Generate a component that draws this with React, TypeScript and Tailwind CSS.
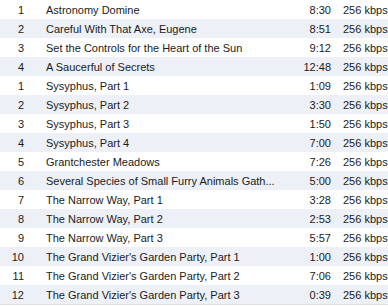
const tracks: [string, string, string][] = [
  ["1", "Astronomy Domine", "8:30"],
  ["2", "Careful With That Axe, Eugene", "8:51"],
  ["3", "Set the Controls for the Heart of the Sun", "9:12"],
  ["4", "A Saucerful of Secrets", "12:48"],
  ["1", "Sysyphus, Part 1", "1:09"],
  ["2", "Sysyphus, Part 2", "3:30"],
  ["3", "Sysyphus, Part 3", "1:50"],
  ["4", "Sysyphus, Part 4", "7:00"],
  ["5", "Grantchester Meadows", "7:26"],
  ["6", "Several Species of Small Furry Animals Gath...", "5:00"],
  ["7", "The Narrow Way, Part 1", "3:28"],
  ["8", "The Narrow Way, Part 2", "2:53"],
  ["9", "The Narrow Way, Part 3", "5:57"],
  ["10", "The Grand Vizier's Garden Party, Part 1", "1:00"],
  ["11", "The Grand Vizier's Garden Party, Part 2", "7:06"],
  ["12", "The Grand Vizier's Garden Party, Part 3", "0:39"],
];

export default function App() {
  return (
    <div
      className="w-[388px] h-[307px] bg-white text-[11px] text-[#1b1b1b] overflow-hidden"
      style={{ fontFamily: '"Liberation Sans", Arial, sans-serif' }}
    >
      {tracks.map(([no, title, len], i) => (
        <div
          key={i}
          className={`flex items-center h-[19px] pt-[1px] leading-[18px] whitespace-nowrap ${i % 2 === 1 ? "bg-[#edf0f6]" : "bg-white"}`}
        >
          <div className="w-[24px] shrink-0 text-right">{no}</div>
          <div className="w-[22px] shrink-0" />
          <div className="flex-1 min-w-0 overflow-hidden">{title}</div>
          <div className="w-[50px] shrink-0 text-right">{len}</div>
          <div className="w-[57px] shrink-0 pl-[12px]">256 kbps</div>
        </div>
      ))}
      <div className="h-px bg-[#dcdfe5]" />
    </div>
  );
}
